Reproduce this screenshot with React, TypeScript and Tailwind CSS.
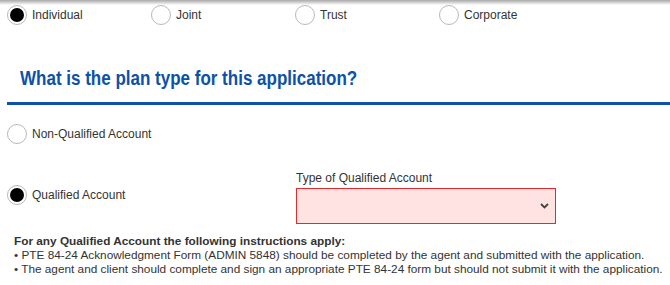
function Radio({ checked, label }: { checked?: boolean; label: string }) {
  return (
    <label className="flex items-center gap-[5px]">
      <span className="flex h-[20px] w-[20px] items-center justify-center rounded-full border border-[#b8b8b8] bg-white">
        {checked && <span className="h-[14px] w-[14px] rounded-full bg-black" />}
      </span>
      <span className="text-[12px] text-[#333]">{label}</span>
    </label>
  );
}

export default function App() {
  return (
    <div className="relative h-[285px] w-[670px] overflow-hidden bg-white font-['Liberation_Sans',Arial,sans-serif]">
      <div className="absolute inset-x-0 top-0 h-[5px] bg-gradient-to-b from-[#a9a9a9] to-white" />
      <div className="grid grid-cols-[144px_144px_144px_144px] pl-[7px] pt-[5px]">
        <Radio checked label="Individual" />
        <Radio label="Joint" />
        <Radio label="Trust" />
        <Radio label="Corporate" />
      </div>

      <div className="ml-[7px] mt-[41px] border-b-[3px] border-[#0b52a8] pb-[10px] pl-[13px]">
        <h2 className="inline-block origin-left scale-x-[0.85] whitespace-nowrap text-[20px] font-bold leading-[24px] text-[#0b52a8]">
          What is the plan type for this application?
        </h2>
      </div>

      <div className="pl-[7px] pt-[19px]">
        <Radio label="Non-Qualified Account" />
      </div>

      <div className="mt-[27px] flex items-end pl-[7px]">
        <div className="w-[289px] pb-[19px]">
          <Radio checked label="Qualified Account" />
        </div>
        <div className="flex flex-col">
          <span className="mb-[3px] text-[12px] leading-[14px] text-[#333]">Type of Qualified Account</span>
          <div className="flex h-[36px] w-[260px] items-center justify-end border border-[#e8262b] bg-[#ffe3e3] pr-[6px]">
            <svg width="9" height="6" viewBox="0 0 9 6">
              <path d="M1 1l3.5 3.5L8 1" fill="none" stroke="#444" strokeWidth="1.8" />
            </svg>
          </div>
        </div>
      </div>

      <div className="pl-[14px] pt-[10px] text-[11.8px] leading-[14px] text-[#333]">
        <p className="font-bold">For any Qualified Account the following instructions apply:</p>
        <p>• PTE 84-24 Acknowledgment Form (ADMIN 5848) should be completed by the agent and submitted with the application.</p>
        <p className="whitespace-nowrap">• The agent and client should complete and sign an appropriate PTE 84-24 form but should not submit it with the application.</p>
      </div>
    </div>
  );
}
